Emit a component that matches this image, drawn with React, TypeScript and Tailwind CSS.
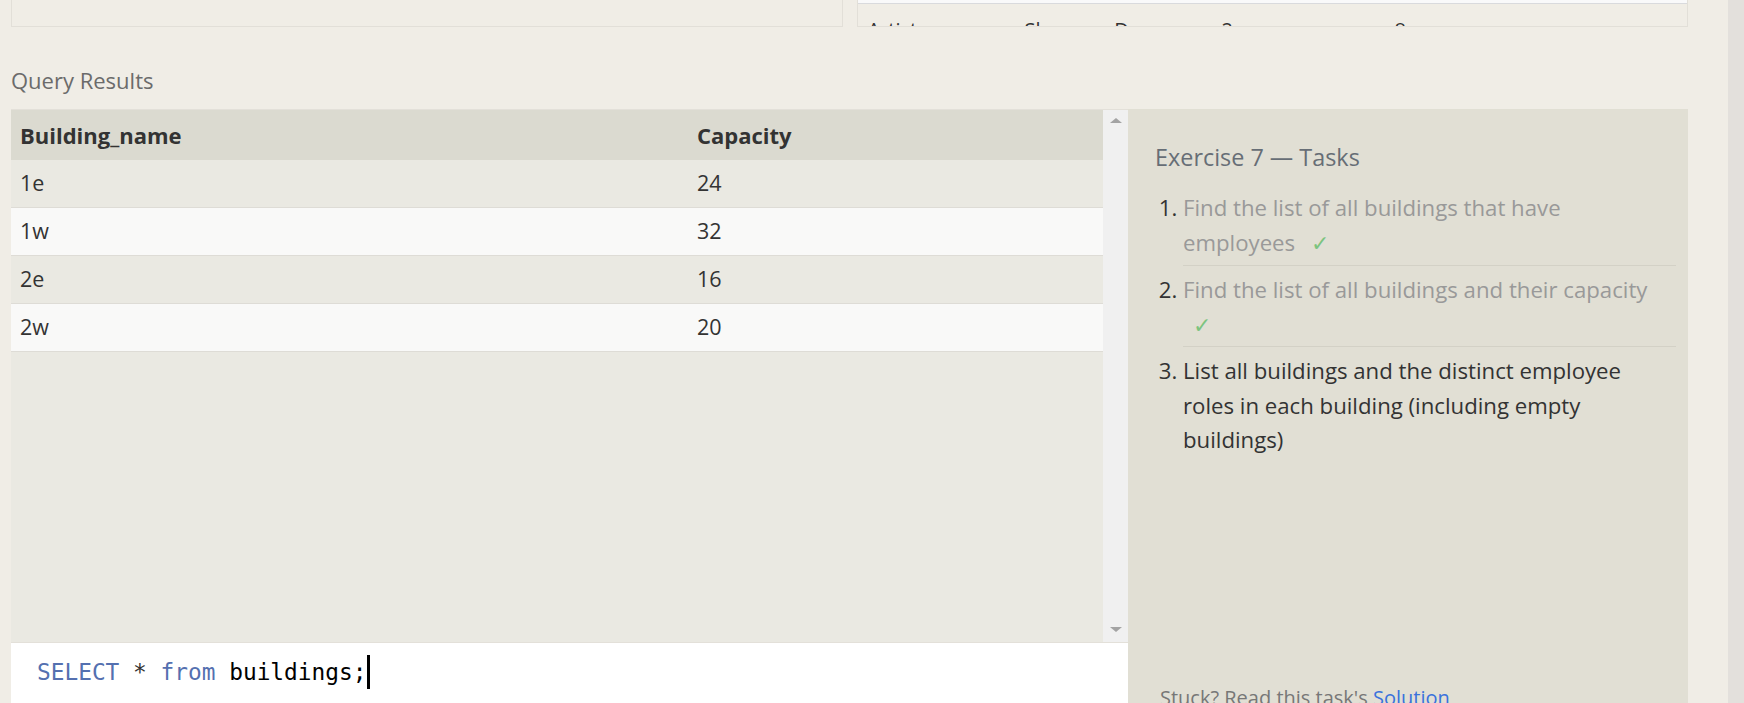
const ui = { fontFamily: '"Open Sans", "Noto Sans", Arial, sans-serif' };
const mono = { fontFamily: '"DejaVu Sans Mono", "Liberation Mono", monospace' };

const rows = [
  ["1e", "24"],
  ["1w", "32"],
  ["2e", "16"],
  ["2w", "20"],
];

function Check() {
  return <span className="ml-[10px] text-[#7cc47f]">✓</span>;
}

export default function App() {
  return (
    <div className="flex h-[703px] w-full overflow-hidden bg-[#f0ede6] text-[#333]" style={ui}>
      <div className="min-w-0 flex-1 pl-[11px] pr-[40px]">
        {/* panels of the previous section, scrolled mostly out of view */}
        <div className="flex h-[27px] gap-[14px]">
          <div className="flex-1 border border-t-0 border-[#e2dfd8]" />
          <div className="flex flex-1 flex-col overflow-hidden border border-t-0 border-[#e2dfd8]">
            <div className="h-[4px] shrink-0 border-b border-[#d9dadd] bg-[#f9f9fa]" />
            <div className="flex pt-[14px] pl-[10px] text-[20px] leading-[24px]">
              <span className="w-[157px]">Artist</span>
              <span className="w-[197px]">Sherman D</span>
              <span className="w-[173px]">2w</span>
              <span>8</span>
            </div>
          </div>
        </div>

        <h2 className="mt-[38px] text-[22px] leading-[30px] text-[#6b6b6b]">Query Results</h2>

        <div className="mt-[14px] flex">
          <div className="flex w-[1117px] shrink-0 flex-col">
            <div className="flex h-[533px] border-t border-[#e3e0d9]">
              <div className="flex-1 bg-[#eae9e2]">
                <div className="flex h-[50px] items-center bg-[#dbdad0] text-[22px] font-bold">
                  <div className="w-[677px] pl-[9px]">Building_name</div>
                  <div className="pl-[9px]">Capacity</div>
                </div>
                {rows.map((r, i) => (
                  <div
                    key={r[0]}
                    className={
                      "flex h-[48px] items-center border-b border-[#dedcd6] text-[21.5px] " +
                      (i % 2 === 0 ? "bg-[#eae9e2]" : "bg-[#f9f9f8]")
                    }
                  >
                    <div className="w-[677px] pl-[9px]">{r[0]}</div>
                    <div className="pl-[9px]">{r[1]}</div>
                  </div>
                ))}
              </div>
              <div className="flex w-[25px] flex-col items-center justify-between bg-[#f0f0f0] pt-[8px] pb-[10px]">
                <div className="h-0 w-0 border-x-[6px] border-b-[5px] border-x-transparent border-b-[#a3a3a3]" />
                <div className="h-0 w-0 border-x-[6px] border-t-[5px] border-x-transparent border-t-[#a3a3a3]" />
              </div>
            </div>
            <div className="h-[80px] border-t border-[#e3e0d9] bg-white pt-[12px] pl-[26px]">
              <div className="flex items-center text-[22.8px] leading-[30px]" style={mono}>
                <span className="text-[#5470b0]">SELECT</span>
                <span className="whitespace-pre text-[#333]"> * </span>
                <span className="text-[#5470b0]">from</span>
                <span className="whitespace-pre text-black"> buildings;</span>
                <span className="ml-[1px] h-[34px] w-[3px] bg-black" />
              </div>
            </div>
          </div>

          <div className="min-w-0 flex-1 bg-[#e1dfd4] pt-[28px] pr-[12px] pl-[27px]">
            <h3 className="text-[23.4px] leading-[40px] text-[#676e76]">Exercise 7 — Tasks</h3>
            <ol className="mt-[14px] list-decimal pl-[28px] text-[22.2px] leading-[34.5px] marker:text-[#333]">
              <li className="border-b border-[#d3d1c6] pr-[12px] pb-[5px] text-[#999]">
                Find the list of all buildings that have employees{" "}
                <Check />
              </li>
              <li className="border-b border-[#d3d1c6] pt-[7px] pr-[12px] pb-[4px] text-[#999]">
                Find the list of all buildings and their capacity{" "}
                <Check />
              </li>
              <li className="pt-[7px] pr-[12px] text-[#333]">
                List all buildings and the distinct employee roles in each building (including empty buildings)
              </li>
            </ol>
            <p className="mt-[223px] pl-[5px] text-[20px] leading-[34px] text-[#777]">
              Stuck? Read this task's <span className="text-[#3a72dc]">Solution</span>
            </p>
          </div>
        </div>
      </div>
      <div className="w-[16px] shrink-0 bg-[#e3e0dc]" />
    </div>
  );
}
